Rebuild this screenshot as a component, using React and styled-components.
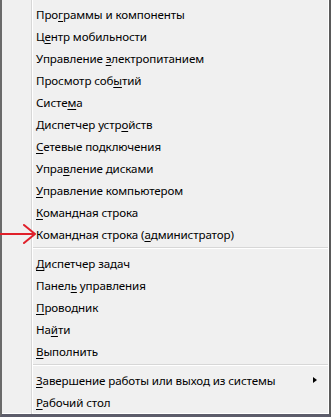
import React from "react";
import styled, { createGlobalStyle } from "styled-components";

const GlobalStyle = createGlobalStyle`
  html, body {
    margin: 0;
    padding: 0;
    background: #f0f0f0;
  }
  #root {
    width: 331px;
    height: 417px;
  }
`;

const Frame = styled.div`
  position: relative;
  width: 331px;
  height: 417px;
  box-sizing: border-box;
  background: #f0f0f0;
  border-left: 2px solid #6a6a6a;
  border-right: 2px solid #5a5a5a;
  border-bottom: 3px solid #5c5c6a;
  box-shadow: inset -1px -1px 0 #ffffff;
`;

// the gutter with its thin vertical rule
const Menu = styled.ul`
  list-style: none;
  margin: 0;
  padding: 3px 0 0 0;
  height: 100%;
  box-sizing: border-box;
  background-image: linear-gradient(
    to right,
    transparent 29px,
    #d7d7d7 29px,
    #d7d7d7 30px,
    #ffffff 30px,
    #ffffff 31px,
    transparent 31px
  );
  font-family: "Noto Sans", "Open Sans", sans-serif;
  font-size: 11.6px;
  letter-spacing: -0.12px;
  color: #000;
`;

const Item = styled.li`
  display: flex;
  align-items: center;
  justify-content: space-between;
  height: 22px;
  padding: 0 12px 0 34px;
  white-space: nowrap;
  cursor: default;
`;

const Key = styled.span`
  text-decoration: underline;
  text-underline-offset: 2px;
`;

const Separator = styled.li`
  height: 7px;
  margin-left: 31px;
  margin-right: 1px;
  box-sizing: border-box;
  padding-top: 2px;

  &::before {
    content: "";
    display: block;
    height: 1px;
    background: #d7d7d7;
    border-bottom: 1px solid #ffffff;
  }
`;

const SubArrow = styled.span`
  width: 0;
  height: 0;
  border-top: 3.5px solid transparent;
  border-bottom: 3.5px solid transparent;
  border-left: 4px solid #000;
`;

const Pointer = styled.svg`
  position: absolute;
  left: -2px;
  top: 222px;
`;

const groups = [
  [
    ["Про", "г", "раммы и компоненты"],
    ["Ц", "е", "нтр мобильности"],
    ["Управление ", "э", "лектропитанием"],
    ["Просмотр соб", "ы", "тий"],
    ["Систе", "м", "а"],
    ["Диспетчер устр", "о", "йств"],
    ["", "С", "етевые подключения"],
    ["Упра", "в", "ление дисками"],
    ["", "У", "правление компьютером"],
    ["", "К", "омандная строка"],
    ["Командная строка (", "а", "дминистратор)"]
  ],
  [
    ["", "Д", "испетчер задач"],
    ["Панел", "ь", " управления"],
    ["", "П", "роводник"],
    ["На", "й", "ти"],
    ["", "В", "ыполнить"]
  ],
  [
    ["", "З", "авершение работы или выход из системы", true],
    ["", "Р", "абочий стол"]
  ]
];

export default function App() {
  return (
    <>
      <GlobalStyle />
      <Frame>
        <Menu>
          {groups.map((group, gi) => (
            <React.Fragment key={gi}>
              {gi > 0 && <Separator />}
              {group.map(([pre, key, post, sub]) => (
                <Item key={pre + key + post}>
                  <span>
                    {pre}
                    <Key>{key}</Key>
                    {post}
                  </span>
                  {sub && <SubArrow />}
                </Item>
              ))}
            </React.Fragment>
          ))}
        </Menu>
        <Pointer width="40" height="24" viewBox="0 0 40 24">
          <path
            d="M0 12 L35 12 M24 3 L35 12 L24 21"
            fill="none"
            stroke="#e0202a"
            strokeWidth="2"
            strokeLinecap="round"
            strokeLinejoin="round"
          />
        </Pointer>
      </Frame>
    </>
  );
}
